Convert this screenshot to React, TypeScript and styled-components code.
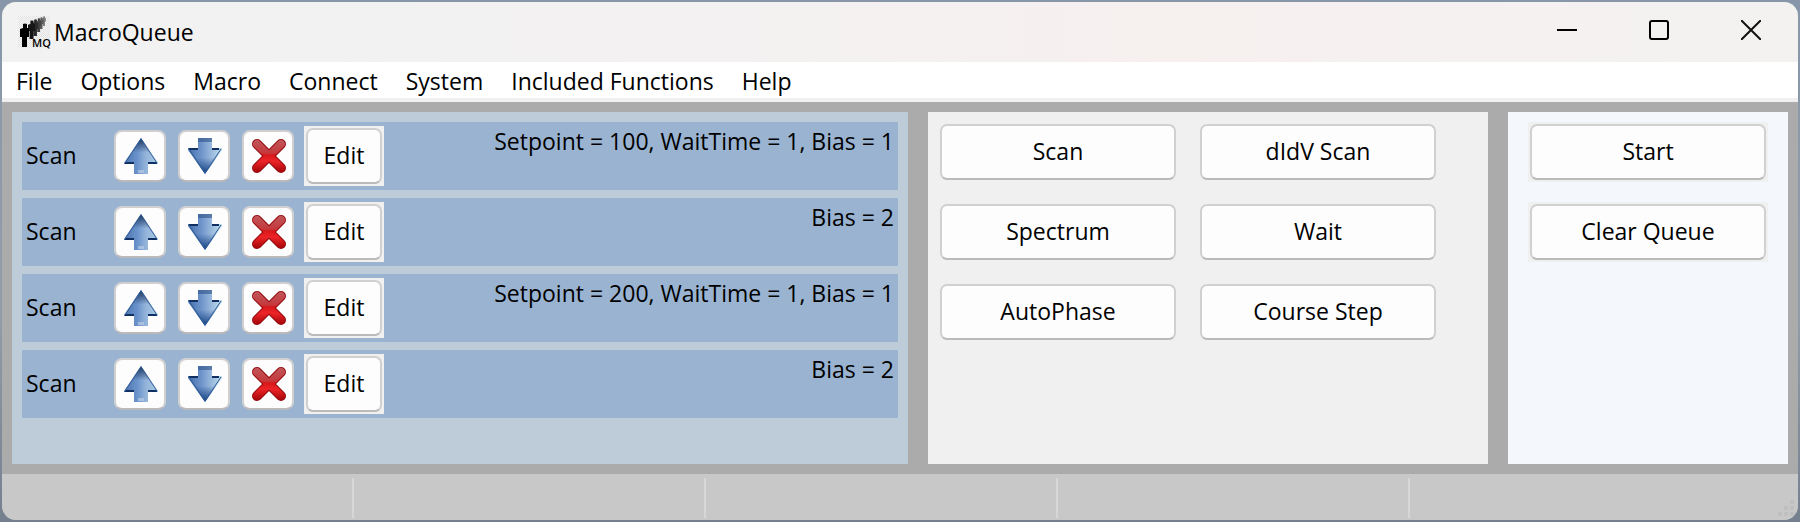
import React from 'react';
import styled, { createGlobalStyle } from 'styled-components';

const GlobalStyle = createGlobalStyle`
  * { box-sizing: border-box; }
  body {
    margin: 0;
    background: linear-gradient(#8797a9, #929ca8 60%, #74808e);
    font-family: 'Open Sans', 'Noto Sans', sans-serif;
    font-size: 23px;
    line-height: 30px;
    color: #000;
  }
  button { font: inherit; color: inherit; }
`;

const Desktop = styled.div`
  display: flex;
  min-height: 100vh;
  padding: 2px;
`;

const Frame = styled.div`
  flex: 1;
  min-width: 0;
  display: flex;
  flex-direction: column;
  overflow: hidden;
  border-radius: 14px;
  background: #ababab;
`;

const TitleBar = styled.header`
  display: flex;
  align-items: center;
  height: 60px;
  padding-left: 16px;
  background: linear-gradient(90deg, #f2f2f2 0%, #f3f1f1 40%, #f6f0ef 65%, #f3f2f1 100%);
`;

const Title = styled.h1`
  flex: 1;
  margin: 0;
  font-size: 23px;
  font-weight: 400;
`;

const WindowButton = styled.button`
  display: flex;
  align-items: center;
  justify-content: center;
  width: 92px;
  height: 56px;
  margin-bottom: 4px;
  padding: 0;
  border: 0;
  background: transparent;
`;

const WindowButtons = styled.div`
  display: flex;
  padding-right: 1px;
`;

const MenuBar = styled.nav`
  display: flex;
  height: 40px;
  border-bottom: 4px solid #f0f0f0;
  background: #fff;
`;

const MenuItem = styled.button`
  height: 36px;
  padding: 2px 14px 0;
  border: 0;
  background: transparent;
  line-height: 34px;
`;

const Body = styled.main`
  flex: 1;
  display: grid;
  grid-template-columns: minmax(0, 1fr) 560px 280px;
  gap: 20px;
  padding: 10px;
`;

const QueueList = styled.ul`
  display: flex;
  flex-direction: column;
  gap: 8px;
  margin: 0;
  padding: 10px;
  list-style: none;
  background: #becbd9;
`;

const QueueRow = styled.li`
  display: flex;
  align-items: center;
  height: 68px;
  padding: 0 4px;
  background: #99b3d1;
`;

const RowName = styled.span`
  width: 88px;
  padding-bottom: 2px;
`;

const RowTools = styled.div`
  display: flex;
  gap: 12px;
  margin-right: 10px;
`;

const RowDetail = styled.span`
  flex: 1;
  align-self: flex-start;
  padding-top: 4px;
  text-align: right;
`;

const IconButton = styled.button`
  display: flex;
  align-items: center;
  justify-content: center;
  width: 52px;
  height: 52px;
  padding: 0 0 0 2px;
  border: 2px solid #d0d0d0;
  border-bottom-color: #bababa;
  border-radius: 8px;
  background: #fdfdfd;
`;

const ButtonBox = styled.div<{ $width: number }>`
  width: ${(p) => p.$width}px;
  height: 60px;
  padding: 2px;
  background: #f0f0f0;
`;

const PushButton = styled.button`
  width: 100%;
  height: 56px;
  padding: 0 0 2px;
  border: 2px solid #d0d0d0;
  border-bottom-color: #bababa;
  border-radius: 7px;
  background: #fdfdfd;
`;

const FunctionPanel = styled.section`
  display: grid;
  grid-template-columns: 240px 240px;
  align-content: start;
  gap: 20px;
  padding: 10px;
  background: #f0f0f0;
`;

const ControlPanel = styled.section`
  display: flex;
  flex-direction: column;
  gap: 20px;
  padding: 10px 20px;
  background: #f4f7fc;
`;

const StatusBar = styled.footer`
  display: grid;
  grid-template-columns: repeat(5, 1fr);
  height: 46px;
  padding: 4px 36px 2px 0;
  position: relative;
  background: #c8c8c8;
`;

const StatusCell = styled.div`
  border-right: 2px solid #d7d7d7;
  &:nth-child(5) { border-right: 0; }
`;

const Grip = styled.svg`
  position: absolute;
  right: 4px;
  bottom: 4px;
`;

const people = [
  { x: 24, y: 0, s: 10, c: '#777' },
  { x: 21, y: 1, s: 12, c: '#5a5a5a' },
  { x: 18, y: 2, s: 14, c: '#444' },
  { x: 14, y: 3, s: 17, c: '#2c2c2c' },
  { x: 10, y: 4, s: 19, c: '#161616' },
  { x: 2, y: 7, s: 24, c: '#000' },
];

const Logo = () => (
  <svg width="36" height="40" viewBox="0 -4 36 40" aria-hidden="true">
    <defs>
      <pattern id="checks" width="2" height="2" patternUnits="userSpaceOnUse">
        <rect width="2" height="2" fill="#f6f6f6" />
        <path d="M0 0h1v1H0zM1 1h1v1H1z" fill="#e2e2e2" />
      </pattern>
    </defs>
    <rect width="32" height="32" fill="url(#checks)" />
    {people.map((p) => (
      <path
        key={p.x}
        transform={`translate(${p.x} ${p.y}) scale(${p.s / 24})`}
        d="M3 1Q5 0 7 1V5H9V14H7V24H2V14H0V6L3 5z"
        fill={p.c}
      />
    ))}
    <text x="14" y="31" fontSize="11" fontWeight="600" fontFamily="Open Sans, sans-serif">MQ</text>
  </svg>
);

const UpArrow = () => (
  <svg width="34" height="36" viewBox="0 0 34 36" aria-hidden="true">
    <defs>
      <linearGradient id="up" x1="0" y1="0" x2="1" y2="0">
        <stop offset="0" stopColor="#4a72ae" />
        <stop offset=".4" stopColor="#6c94cc" />
        <stop offset=".65" stopColor="#94b4da" />
        <stop offset="1" stopColor="#a9cbe6" />
      </linearGradient>
      <linearGradient id="upShade" x1="0" y1="0" x2="0" y2="1">
        <stop offset="0" stopColor="#143058" />
        <stop offset=".4" stopColor="#143058" stopOpacity="0" />
      </linearGradient>
    </defs>
    <path d="M17 0L34 25V26H24V36H10V26H0V25z" fill="url(#up)" />
    <path d="M17 0L34 25V26H24V36H10V26H0V25z" fill="url(#upShade)" />
    <path d="M1 25H10M24 25H33" fill="none" stroke="#102f62" strokeWidth="2" />
    <path d="M17 1L1 25M17 1L33 25" stroke="#355f98" strokeWidth="1" />
    <path d="M14 32h6v3h-6z" fill="#c3d4e8" opacity=".6" />
  </svg>
);

const DownArrow = () => (
  <svg width="34" height="36" viewBox="0 0 34 36" aria-hidden="true">
    <defs>
      <linearGradient id="down" x1="0" y1="0" x2="1" y2="0">
        <stop offset="0" stopColor="#4570ac" />
        <stop offset=".4" stopColor="#6f95cb" />
        <stop offset=".65" stopColor="#94b4da" />
        <stop offset="1" stopColor="#c3e0ee" />
      </linearGradient>
      <linearGradient id="downShade" x1="0" y1="0" x2="0" y2="1">
        <stop offset=".55" stopColor="#123f80" stopOpacity="0" />
        <stop offset="1" stopColor="#123f80" />
      </linearGradient>
    </defs>
    <path d="M10 0H24V10H34V12L17 36L0 12V10H10z" fill="url(#down)" />
    <path d="M10 0H24V10H34V12L17 36L0 12V10H10z" fill="url(#downShade)" />
    <path d="M10 0H24V4H10z" fill="#2d5488" opacity=".6" />
    <path d="M10 11H1M24 11H31" fill="none" stroke="#102f62" strokeWidth="2" />
    <path d="M1 11L17 35L33 11" fill="none" stroke="#2d5a96" strokeWidth="1" />
  </svg>
);

const Cross = () => (
  <svg width="34" height="34" viewBox="0 0 34 34" aria-hidden="true">
    <defs>
      <linearGradient id="cross" x1="0" y1="0" x2="0" y2="34" gradientUnits="userSpaceOnUse">
        <stop offset="0" stopColor="#c0585c" />
        <stop offset=".42" stopColor="#c4383b" />
        <stop offset=".46" stopColor="#d8181b" />
        <stop offset=".65" stopColor="#ec2427" />
        <stop offset="1" stopColor="#a00307" />
      </linearGradient>
    </defs>
    <path d="M5 5L29 29M29 5L5 29" stroke="#940a0e" strokeWidth="10" strokeLinecap="round" />
    <path d="M5 5L29 29M29 5L5 29" stroke="url(#cross)" strokeWidth="8" strokeLinecap="round" />
  </svg>
);

const menus = ['File', 'Options', 'Macro', 'Connect', 'System', 'Included Functions', 'Help'];
const queue = [
  'Setpoint = 100, WaitTime = 1, Bias = 1',
  'Bias = 2',
  'Setpoint = 200, WaitTime = 1, Bias = 1',
  'Bias = 2',
];
const functions = ['Scan', 'dIdV Scan', 'Spectrum', 'Wait', 'AutoPhase', 'Course Step'];
const controls = ['Start', 'Clear Queue'];

export default function App() {
  return (
    <Desktop>
      <GlobalStyle />
      <Frame>
        <TitleBar>
          <Logo />
          <Title>MacroQueue</Title>
          <WindowButtons>
            <WindowButton aria-label="Minimize">
              <svg width="20" height="20"><path d="M0 10H20" stroke="#000" strokeWidth="2" /></svg>
            </WindowButton>
            <WindowButton aria-label="Maximize">
              <svg width="20" height="20"><rect x="1" y="1" width="18" height="18" rx="2" fill="none" stroke="#000" strokeWidth="2" /></svg>
            </WindowButton>
            <WindowButton aria-label="Close">
              <svg width="20" height="20"><path d="M0 0L20 20M20 0L0 20" stroke="#111" strokeWidth="2" /></svg>
            </WindowButton>
          </WindowButtons>
        </TitleBar>
        <MenuBar>
          {menus.map((m) => <MenuItem key={m}>{m}</MenuItem>)}
        </MenuBar>
        <Body>
          <QueueList>
            {queue.map((detail, i) => (
              <QueueRow key={i}>
                <RowName>Scan</RowName>
                <RowTools>
                  <IconButton aria-label="Move up"><UpArrow /></IconButton>
                  <IconButton aria-label="Move down"><DownArrow /></IconButton>
                  <IconButton aria-label="Remove"><Cross /></IconButton>
                </RowTools>
                <ButtonBox $width={80}><PushButton>Edit</PushButton></ButtonBox>
                <RowDetail>{detail}</RowDetail>
              </QueueRow>
            ))}
          </QueueList>
          <FunctionPanel>
            {functions.map((f) => (
              <ButtonBox key={f} $width={240}><PushButton>{f}</PushButton></ButtonBox>
            ))}
          </FunctionPanel>
          <ControlPanel>
            {controls.map((c) => (
              <ButtonBox key={c} $width={240}><PushButton>{c}</PushButton></ButtonBox>
            ))}
          </ControlPanel>
        </Body>
        <StatusBar>
          {[0, 1, 2, 3, 4].map((n) => <StatusCell key={n} />)}
          <Grip width="16" height="16" viewBox="0 0 16 16" aria-hidden="true">
            <path d="M12 0h4v4h-4zM6 6h4v4H6zM12 6h4v4h-4zM0 12h4v4H0zM6 12h4v4H6zM12 12h4v4h-4z" fill="#bfbfbf" />
          </Grip>
        </StatusBar>
      </Frame>
    </Desktop>
  );
}
